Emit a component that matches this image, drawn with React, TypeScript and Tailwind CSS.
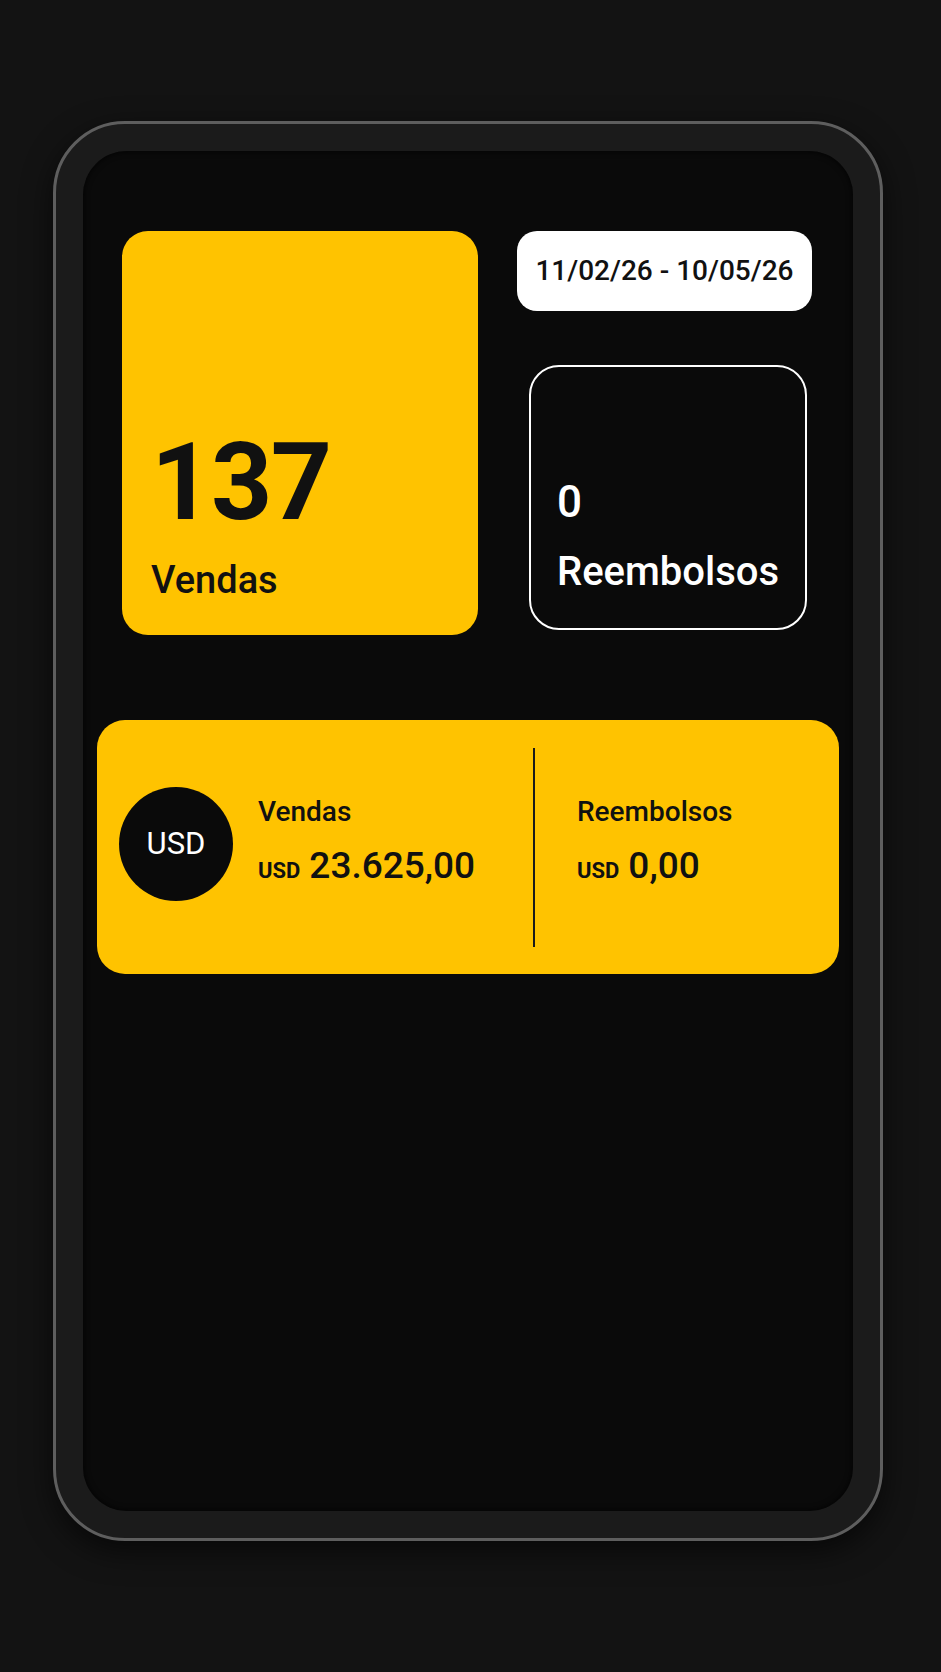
import React from 'react';

const font = { fontFamily: 'Roboto, "Noto Sans", sans-serif' };

const Amount: React.FC<{ label: string; value: string }> = ({ label, value }) => (
  <div className="flex flex-col mb-[6px]">
    <span className="text-[28px] leading-none font-medium text-[#111111]">{label}</span>
    <div className="flex items-baseline mt-[21px]">
      <span className="text-[22px] leading-none font-bold text-[#111111]">USD</span>
      <span className="ml-[9px] text-[37px] leading-none font-medium text-[#111111]">{value}</span>
    </div>
  </div>
);

export default function App() {
  return (
    <div className="min-h-[1672px] w-full bg-[#131313] pt-[121px]" style={font}>
      {/* phone frame */}
      <div className="ml-[53px] w-[830px] h-[1420px] rounded-[72px] border-[3px] border-[#5e5e5e] bg-[#1b1b1b] p-[27px] shadow-[0_10px_30px_rgba(0,0,0,0.6)]">
        <div className="h-full w-full rounded-[44px] bg-[#0a0a0a] px-[14px] pt-[80px] shadow-[inset_0_0_6px_rgba(0,0,0,0.9)]">
          {/* top row */}
          <div className="flex pl-[25px]">
            <div className="w-[356px] h-[404px] rounded-[26px] bg-[#FFC300] flex flex-col justify-end pl-[29px] pb-[36px]">
              <span className="text-[107px] leading-none font-bold text-[#111111] tracking-[-1.5px]">137</span>
              <span className="mt-[25px] text-[38px] leading-none font-medium text-[#111111]">Vendas</span>
            </div>
            <div className="ml-[39px] w-[295px] flex flex-col">
              <div className="h-[80px] rounded-[20px] bg-white flex items-center justify-center">
                <span className="text-[28px] font-medium text-[#111111]">11/02/26 - 10/05/26</span>
              </div>
              <div className="mt-[54px] ml-[12px] w-[278px] h-[265px] rounded-[30px] border-2 border-white flex flex-col justify-end pl-[26px] pb-[36px]">
                <span className="text-[44px] leading-none font-medium text-white">0</span>
                <span className="mt-[28px] text-[40px] leading-none font-medium text-white">Reembolsos</span>
              </div>
            </div>
          </div>

          {/* totals card */}
          <div className="mt-[85px] h-[254px] rounded-[28px] bg-[#FFC300] flex items-center pl-[22px] pb-[6px]">
            <div className="w-[114px] h-[114px] rounded-full bg-[#0a0a0a] flex items-center justify-center shrink-0">
              <span className="text-[31px] text-white font-normal">USD</span>
            </div>
            <div className="ml-[25px] flex-1 self-stretch flex items-center">
              <Amount label="Vendas" value="23.625,00" />
            </div>
            <div className="w-[2px] self-stretch mt-[28px] mb-[21px] bg-[#1a1a1a]" />
            <div className="w-[304px] pl-[42px] self-stretch flex items-center">
              <Amount label="Reembolsos" value="0,00" />
            </div>
          </div>
        </div>
      </div>
    </div>
  );
}
